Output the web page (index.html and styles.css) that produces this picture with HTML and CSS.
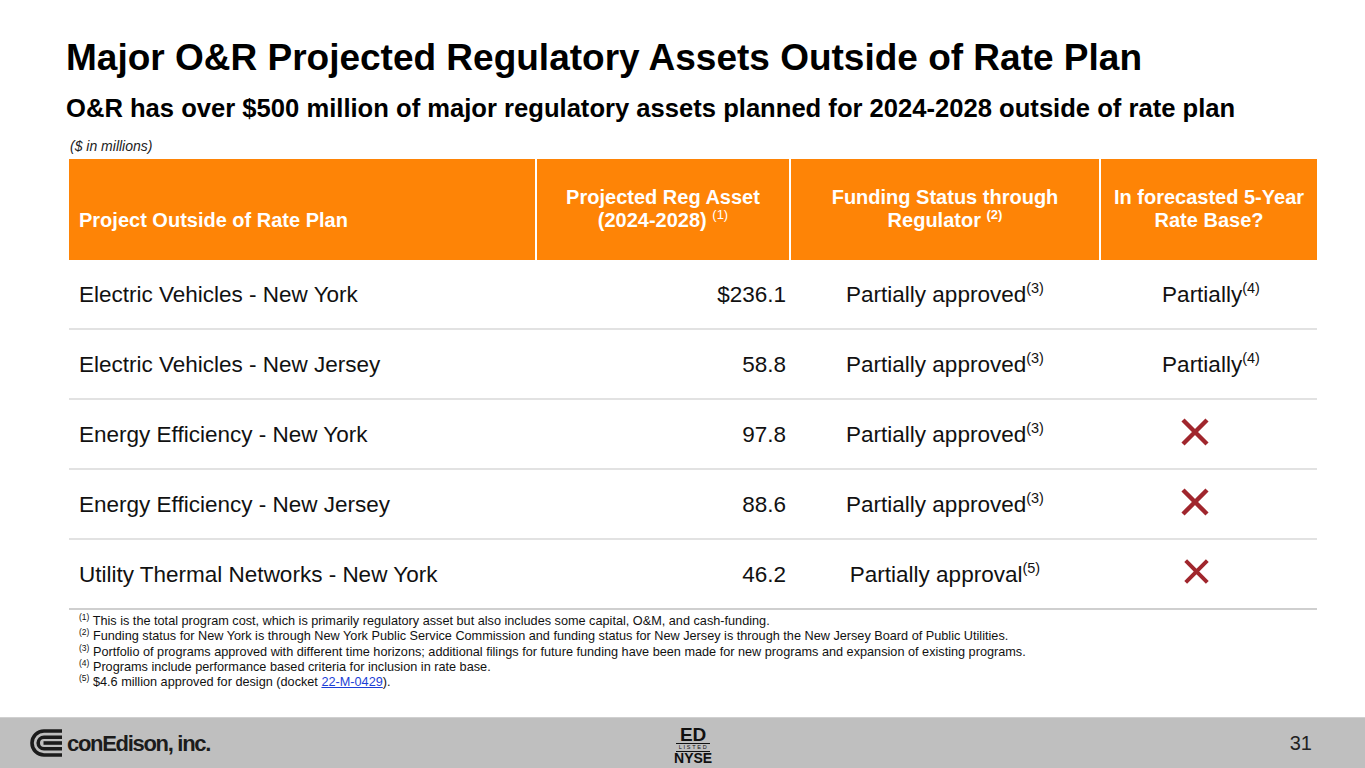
FILE: index.html
```html
<!DOCTYPE html>
<html lang="en">
<head>
<meta charset="utf-8">
<title>Major O&amp;R Projected Regulatory Assets Outside of Rate Plan</title>
<link rel="stylesheet" href="styles.css">
</head>
<body>
<div class="slide">
  <main class="content">
    <h1 class="title">Major O&amp;R Projected Regulatory Assets Outside of Rate Plan</h1>
    <h2 class="subtitle">O&amp;R has over $500 million of major regulatory assets planned for 2024-2028 outside of rate plan</h2>
    <div class="units">($ in millions)</div>
    <div class="table">
      <div class="row head">
        <div class="hcell left"><span>Project Outside of Rate Plan</span></div>
        <div class="hcell"><span>Projected Reg Asset<br>(2024-2028) <sup class="light">(1)</sup></span></div>
        <div class="hcell"><span>Funding Status through<br>Regulator <sup>(2)</sup></span></div>
        <div class="hcell"><span>In forecasted 5-Year<br>Rate Base?</span></div>
      </div>
      <div class="row body">
        <div class="cell name"><span>Electric Vehicles - New York</span></div>
        <div class="cell num"><span>$236.1</span></div>
        <div class="cell mid"><span>Partially approved<sup>(3)</sup></span></div>
        <div class="cell mid"><span>Partially<sup>(4)</sup></span></div>
      </div>
      <div class="row body">
        <div class="cell name"><span>Electric Vehicles - New Jersey</span></div>
        <div class="cell num"><span>58.8</span></div>
        <div class="cell mid"><span>Partially approved<sup>(3)</sup></span></div>
        <div class="cell mid"><span>Partially<sup>(4)</sup></span></div>
      </div>
      <div class="row body">
        <div class="cell name"><span>Energy Efficiency - New York</span></div>
        <div class="cell num"><span>97.8</span></div>
        <div class="cell mid"><span>Partially approved<sup>(3)</sup></span></div>
        <div class="cell mid"><svg class="xmark" viewBox="0 0 30 30" aria-label="No"><path d="M3 3 L27 27 M27 3 L3 27"/></svg></div>
      </div>
      <div class="row body">
        <div class="cell name"><span>Energy Efficiency - New Jersey</span></div>
        <div class="cell num"><span>88.6</span></div>
        <div class="cell mid"><span>Partially approved<sup>(3)</sup></span></div>
        <div class="cell mid"><svg class="xmark" viewBox="0 0 30 30" aria-label="No"><path d="M3 3 L27 27 M27 3 L3 27"/></svg></div>
      </div>
      <div class="row body last">
        <div class="cell name"><span>Utility Thermal Networks - New York</span></div>
        <div class="cell num"><span>46.2</span></div>
        <div class="cell mid"><span>Partially approval<sup>(5)</sup></span></div>
        <div class="cell mid"><svg class="xmark small" viewBox="0 0 30 30" aria-label="No"><path d="M3 3 L27 27 M27 3 L3 27"/></svg></div>
      </div>
    </div>
    <ol class="notes">
      <li><sup>(1)</sup> This is the total program cost, which is primarily regulatory asset but also includes some capital, O&amp;M, and cash-funding.</li>
      <li><sup>(2)</sup> Funding status for New York is through New York Public Service Commission and funding status for New Jersey is through the New Jersey Board of Public Utilities.</li>
      <li><sup>(3)</sup> Portfolio of programs approved with different time horizons; additional filings for future funding have been made for new programs and expansion of existing programs.</li>
      <li><sup>(4)</sup> Programs include performance based criteria for inclusion in rate base.</li>
      <li><sup>(5)</sup> $4.6 million approved for design (docket <a href="#">22-M-0429</a>).</li>
    </ol>
  </main>
  <footer class="footer">
    <div class="brand">
      <svg class="brand-icon" viewBox="0 0 32 28" aria-hidden="true">
        <path d="M32 2 H14 A12 12 0 0 0 14 26 H32"/>
        <path d="M32 8.2 H14 A5.8 5.8 0 0 0 14 19.8 H32"/>
        <path d="M13.5 14 H32"/>
      </svg>
      <span class="brand-name">conEdison, inc.</span>
    </div>
    <div class="nyse">
      <span class="nyse-ed">ED</span>
      <span class="nyse-listed">LISTED</span>
      <span class="nyse-name">NYSE</span>
    </div>
    <div class="page">31</div>
  </footer>
</div>
</body>
</html>
```
FILE: styles.css
```css
* { box-sizing: border-box; }
html, body { margin: 0; padding: 0; background: #fff; }
body {
  font-family: "Liberation Sans", Arial, sans-serif;
  color: #111;
}
.slide {
  width: 1365px;
  height: 768px;
  display: flex;
  flex-direction: column;
  overflow: hidden;
}
.content {
  padding: 36px 0 0 66px;
  flex: 1;
}
.title {
  margin: 0;
  font-size: 37px;
  line-height: 44px;
  font-weight: bold;
  color: #000;
}
.subtitle {
  margin: 13px 0 0;
  font-size: 25.6px;
  line-height: 30px;
  font-weight: bold;
  color: #000;
}
.units {
  margin: 15px 0 0 4px;
  font-size: 14px;
  line-height: 17px;
  font-style: italic;
  color: #222;
}
.table {
  margin: 4px 0 0 3px;
  width: 1248px;
}
.row {
  display: grid;
  grid-template-columns: 466px 252px 308px 216px;
  column-gap: 2px;
}
.head { height: 101px; }
.hcell {
  background: #fe8406;
  color: #fff;
  font-weight: bold;
  font-size: 20px;
  line-height: 23px;
  text-align: center;
  display: flex;
  align-items: flex-end;
  justify-content: center;
  padding-bottom: 28px;
}
.hcell.left { justify-content: flex-start; padding-left: 10px; text-align: left; }
.hcell sup { font-size: 13px; line-height: 0; vertical-align: 8px; }
.hcell sup.light { font-weight: normal; }
.body {
  height: 70px;
  border-bottom: 2px solid #e2e2e2;
}
.body.last { border-bottom-color: #cfcfcf; }
.cell {
  display: flex;
  align-items: center;
  font-size: 22.5px;
  color: #111;
  padding-top: 1px;
}
.cell sup { font-size: 14.5px; line-height: 0; vertical-align: 9px; }
.cell.name { padding-left: 10px; }
.cell.num { justify-content: flex-end; padding-right: 3px; }
.cell.mid { justify-content: center; }
.cell.mid:last-child { padding-left: 4px; }
.xmark {
  width: 30px;
  height: 30px;
  margin-right: 32px;
  margin-top: -6px;
  fill: none;
  stroke: #a0262d;
  stroke-width: 4.4;
}
.xmark.small { width: 27px; height: 27px; margin-right: 30px; }
.notes {
  list-style: none;
  margin: 4px 0 0 13px;
  padding: 0;
  font-size: 12.7px;
  line-height: 15.3px;
  color: #111;
}
.notes sup { font-size: 8.5px; line-height: 0; vertical-align: 5px; }
.notes a { color: #1c3fd6; text-decoration: underline; }
.footer {
  height: 51px;
  background: #bfbfbf;
  border-top: 1px solid #d0d0d0;
  display: flex;
  align-items: center;
  padding: 0 53px 0 30px;
}
.brand { display: flex; align-items: center; gap: 5px; }
.brand-icon {
  width: 32px;
  height: 28px;
  fill: none;
  stroke: #1c1c1c;
  stroke-width: 3.6;
}
.brand-name {
  font-size: 22px;
  font-weight: bold;
  letter-spacing: -1.3px;
  color: #1c1c1c;
  margin-top: 1px;
}
.nyse {
  margin-left: 465px;
  display: flex;
  flex-direction: column;
  align-items: center;
  width: 36px;
  color: #111;
  font-weight: bold;
  margin-top: 4px;
}
.nyse-ed { font-size: 19px; line-height: 17px; }
.nyse-listed {
  font-size: 5.5px;
  line-height: 7px;
  letter-spacing: 1.7px;
  font-weight: normal;
  border-top: 1px solid #111;
  border-bottom: 1px solid #111;
  width: 34px;
  text-align: center;
  padding-left: 1px;
}
.nyse-name { font-size: 14px; line-height: 13px; }
.page {
  margin-left: auto;
  font-size: 20px;
  color: #222;
}
```
